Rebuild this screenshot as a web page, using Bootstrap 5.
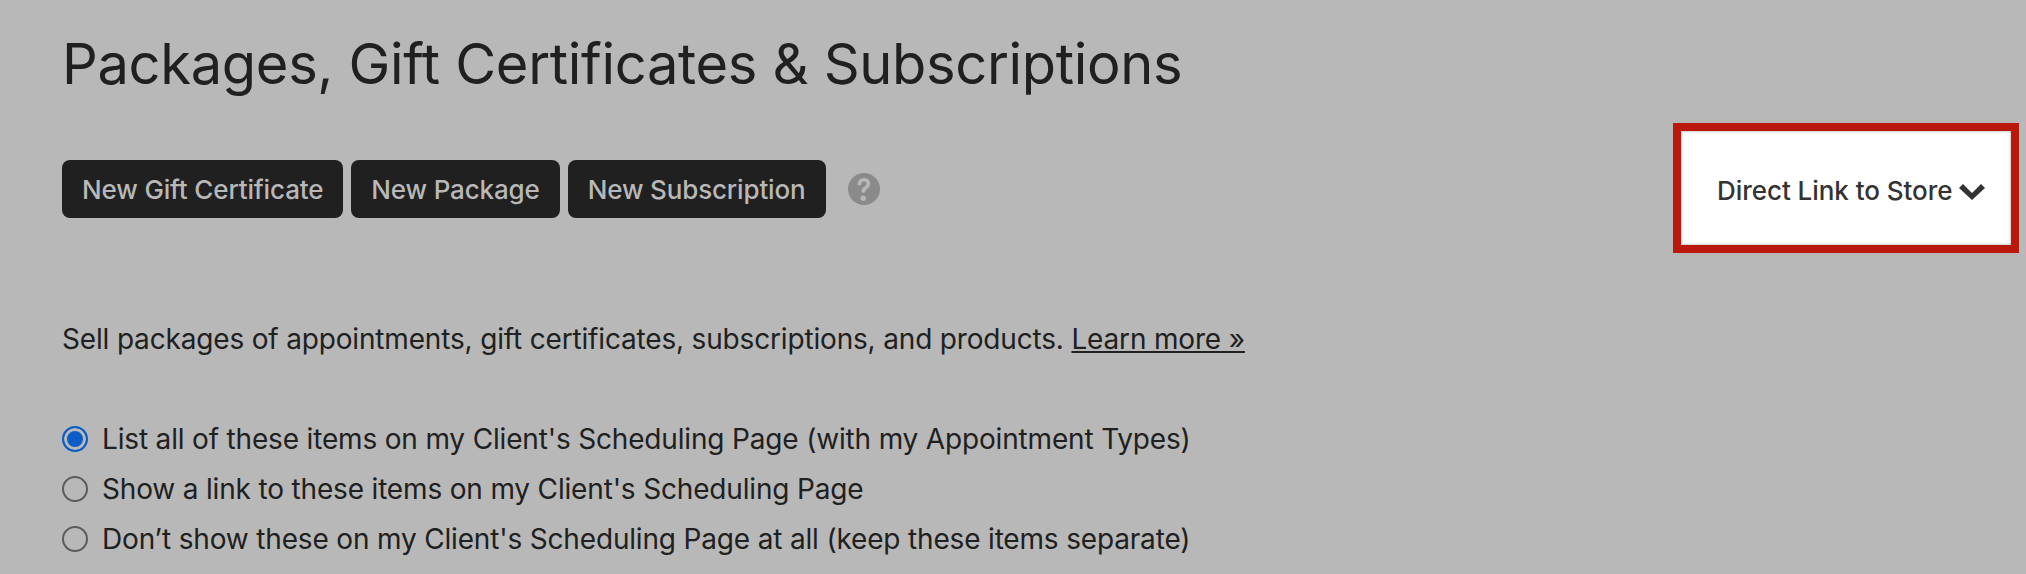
<!DOCTYPE html>
<html lang="en">
<head>
<meta charset="utf-8">
<title>Packages</title>
<link href="https://cdn.jsdelivr.net/npm/bootstrap@5.3.0/dist/css/bootstrap.min.css" rel="stylesheet">
<style>
html,body{height:100%;}
body{background:#b8b8b8;color:#202020;font-family:Inter,"Liberation Sans",sans-serif;overflow:hidden;}
.page-wrap{padding:26px 7px 0 62px;}
.page-title{font-size:56px;font-weight:400;line-height:76px;letter-spacing:-.32px;margin:0 0 21px;color:#202020;}
.tool-row{height:130px;}
.act-group{padding-top:2px;}
.act-btn{background:#202020;color:#b8b8b8;border:0;border-radius:8px;height:58px;font-size:26px;font-weight:500;letter-spacing:-.15px;padding:0 20px;}
.act-btn:hover{background:#202020;color:#b8b8b8;}
.help-ico{width:32px;height:32px;margin-left:14px;}
.store-box{width:346px;height:130px;border:8px solid #b8190a;background:#fff;box-shadow:inset 0 0 3px #999;color:#333;font-size:26px;font-weight:500;letter-spacing:-.05px;padding:4px 0 0 36px;gap:7px;}
.store-chev{width:26px;height:16px;margin-top:4px;}
.intro{font-size:28px;letter-spacing:-.17px;line-height:38px;margin:67px 0 56px;}
.intro a{color:#202020;}
.radio-row{height:50px;margin:0;padding:0;}
.radio-row .form-check-input{width:26px;height:26px;margin:0 14px 0 0;background-color:transparent;border:2px solid #5c5c5c;float:none;flex:none;}
.radio-row .form-check-input:checked{background-color:#0a5cc7;border-color:#0a5cc7;background-image:none;box-shadow:inset 0 0 0 3px #b8b8b8;}
.radio-row .form-check-label{font-size:28px;letter-spacing:-.17px;line-height:38px;}
</style>
</head>
<body>
<div class="page-wrap">
  <h1 class="page-title">Packages, Gift Certificates &amp; Subscriptions</h1>
  <div class="tool-row d-flex align-items-center justify-content-between">
    <div class="act-group d-flex align-items-center gap-2">
      <button type="button" class="btn act-btn">New Gift Certificate</button>
      <button type="button" class="btn act-btn">New Package</button>
      <button type="button" class="btn act-btn">New Subscription</button>
      <svg class="help-ico" viewBox="0 0 32 32" aria-hidden="true"><circle cx="16" cy="16" r="16" fill="#8a8a8a"/><path d="M11.200 12.200C11.200 8.800 13.200 6.800 16 6.800C18.700 6.800 20.400 8.500 20.400 10.800C20.400 13 19 13.900 17.400 15C15.800 16.100 15.200 17 15.200 19.600" fill="none" stroke="#b8b8b8" stroke-width="3.600"/><circle cx="15.200" cy="25.300" r="2.700" fill="#b8b8b8"/></svg>
    </div>
    <div class="store-box d-flex align-items-center">
      <span>Direct Link to Store</span>
      <svg class="store-chev" viewBox="0 0 26 16" aria-hidden="true"><path d="M0 4 4 0 13 9 22 0 26 4 13 16z" fill="#333"/></svg>
    </div>
  </div>
  <p class="intro">Sell packages of appointments, gift certificates, subscriptions, and products. <a href="#">Learn more »</a></p>
  <div class="form-check radio-row d-flex align-items-center">
    <input class="form-check-input" type="radio" name="vis" id="v1" checked>
    <label class="form-check-label" for="v1">List all of these items on my Client's Scheduling Page (with my Appointment Types)</label>
  </div>
  <div class="form-check radio-row d-flex align-items-center">
    <input class="form-check-input" type="radio" name="vis" id="v2">
    <label class="form-check-label" for="v2">Show a link to these items on my Client's Scheduling Page</label>
  </div>
  <div class="form-check radio-row d-flex align-items-center">
    <input class="form-check-input" type="radio" name="vis" id="v3">
    <label class="form-check-label" for="v3">Don’t show these on my Client's Scheduling Page at all (keep these items separate)</label>
  </div>
</div>
<script src="https://cdn.jsdelivr.net/npm/bootstrap@5.3.0/dist/js/bootstrap.bundle.min.js"></script>
</body>
</html>
